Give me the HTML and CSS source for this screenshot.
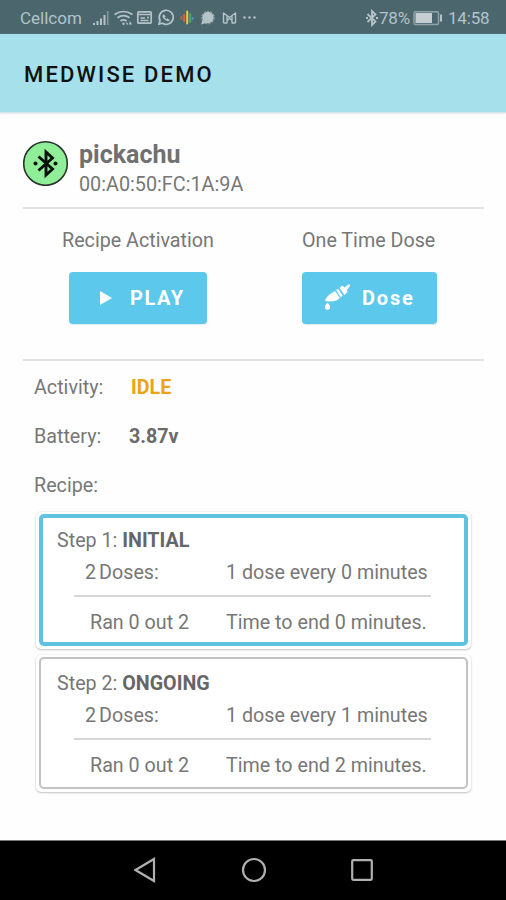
FILE: index.html
```html
<!DOCTYPE html>
<html lang="en">
<head>
<meta charset="utf-8">
<title>Medwise Demo</title>
<link rel="stylesheet" href="styles.css">
</head>
<body>
<div class="screen">
  <div class="status">
    <span class="carrier">Cellcom</span>
    <svg class="status-icons" width="170" height="24" viewBox="0 0 170 24" fill="#b4c3c8" stroke="none">
      <path d="M3 17h2v2H3zM6.500 15h2v4h-2zM10 12.500h2V19h-2zM13.500 9h2v10h-2z"/>
      <path d="M17 5h1.500v14H17z" opacity=".55"/>
      <g fill="none" stroke="#b4c3c8" stroke-width="1.700">
        <path d="M24.500 8.500q9-6 18 0M27.500 11.800q6-4.500 12 0M30.500 15q3-2.400 6 0"/>
        <rect x="47.800" y="5.800" width="13.400" height="11.400" rx="1"/>
        <path d="M48 8.500h13M50.500 12h4.500M57 11.500h2M50.500 14.500h8"/>
        <path d="M69 18l1-3.500A7 7 0 1 1 72.500 17.200Z"/>
        <path d="M73.500 8.500q-2 2 1 4.700t5 1.300l-1.800-1.900-1.300.9-2-2 1-1.300z" fill="#b4c3c8" stroke-width=".6"/>
      </g>
      <circle cx="33.500" cy="17.700" r="1.200"/><path d="M36.500 18.500v-3l2 3h-2zM40 15l2 3.500h-3z"/>
      <g stroke-width="2" stroke-linecap="round">
        <path d="M91.500 11v2" stroke="#d85749"/><path d="M94.200 9v6" stroke="#d9643f"/>
        <path d="M97.200 5.500v12" stroke="#e6ca49"/><path d="M100.200 8v8" stroke="#4ca86a"/><path d="M102.700 12v1" stroke="#568fc5"/>
      </g>
      <circle cx="118" cy="11.500" r="5.700"/><path d="M112.500 13.500l-1.300 5 5-1.500z"/>
      <circle cx="118" cy="11.500" r="6.300" fill="none" stroke="#b4c3c8" stroke-width=".8" stroke-dasharray="2 1.500"/>
      <path d="M133.500 17V7l6 4.500 6-4.500v10M133.500 17h3.500v-2.500l2.500-2 2.500 2v2.500h3.500M137 14.500V10M142 14.500V10" fill="none" stroke="#b4c3c8" stroke-width="1.400" stroke-linejoin="round"/>
      <circle cx="154.500" cy="11.500" r="1.200"/><circle cx="159.500" cy="11.500" r="1.200"/><circle cx="164.500" cy="11.500" r="1.200"/>
    </svg>
    <span class="spacer"></span>
    <svg class="bt" width="12" height="18" viewBox="0 0 12 18" fill="none" stroke="#b4c3c8" stroke-width="1.800"><path d="M1.500 5l8 7.500L6 16V2l3.500 3.500-8 7.500M0 9h2M10 9h2"/></svg>
    <span class="percent">78%</span>
    <svg class="battery" width="30" height="16" viewBox="0 0 30 16"><rect x="1" y="1.700" width="24.500" height="12.800" rx="1.500" fill="none" stroke="#91a2a8" stroke-width="1.500"/><path d="M2.500 3H19v10H2.500z" fill="#c4ced1"/><path d="M27 4.500h2v7h-2z" fill="#b4c3c8"/></svg>
    <span class="clock">14:58</span>
  </div>
  <header class="appbar"><h1>MEDWISE DEMO</h1></header>
  <main>
    <section class="device">
      <svg width="46" height="46" viewBox="0 0 46 46"><circle cx="22.500" cy="23.500" r="21.800" fill="#90ee98" stroke="#28352b" stroke-width="1.600"/><path d="M15.500 16.500l14 12.500-6.500 6V12l6.500 6-14 12.500" fill="none" stroke="#0b120c" stroke-width="2.900" stroke-linejoin="miter"/><circle cx="12.500" cy="23.500" r="2" fill="#0b120c"/><circle cx="32.500" cy="23.500" r="2" fill="#0b120c"/></svg>
      <div class="device-text">
        <div class="name">pickachu</div>
        <div class="mac">00:A0:50:FC:1A:9A</div>
      </div>
    </section>
    <section class="actions">
      <div class="action">
        <span class="action-label">Recipe Activation</span>
        <button class="btn play"><svg width="12" height="14" viewBox="0 0 12 14"><path d="M0 0l12 7-12 7z" fill="#fff"/></svg><span>PLAY</span></button>
      </div>
      <div class="action">
        <span class="action-label">One Time Dose</span>
        <button class="btn dose"><svg width="28" height="28" viewBox="0 0 28 28" fill="#fff"><path d="M1 17Q2.500 12 7 9.500l4-2.500 5 7-3.500 2.500Q7 18 1 17zM12 6l2-1.200 4.800 7-2 1.400zM15.500 4l3-2.500 1.800 2L24 .7q3-1 1.500 2L23 6l.5 2-3 3z"/><path d="M3.500 18.500q-3 3.200-2.700 4.500a2.700 2.700 0 0 0 5.400 0q.3-1.300-2.700-4.500z"/></svg><span>Dose</span></button>
      </div>
    </section>
    <section class="facts">
      <div class="fact"><span class="key">Activity:</span><b class="idle">IDLE</b></div>
      <div class="fact"><span class="key">Battery:</span><b class="volt">3.87v</b></div>
      <div class="fact"><span class="key">Recipe:</span></div>
    </section>
    <section class="steps">
      <article class="card active">
        <div class="inner">
          <div class="title">Step 1: <b>INITIAL</b></div>
          <div class="row doses"><span class="left">2<i></i>Doses:</span><span>1 dose every 0 minutes</span></div>
          <div class="row ran"><span class="left">Ran 0 out 2</span><span>Time to end 0 minutes.</span></div>
        </div>
      </article>
      <article class="card">
        <div class="inner">
          <div class="title">Step 2: <b>ONGOING</b></div>
          <div class="row doses"><span class="left">2<i></i>Doses:</span><span>1 dose every 1 minutes</span></div>
          <div class="row ran"><span class="left">Ran 0 out 2</span><span>Time to end 2 minutes.</span></div>
        </div>
      </article>
    </section>
  </main>
  <nav class="navbar">
    <svg width="22" height="26" viewBox="0 0 22 26"><path d="M1.500 13L20 2v22z"/></svg>
    <svg width="26" height="26" viewBox="0 0 26 26"><circle cx="13" cy="13" r="11"/></svg>
    <svg width="22" height="22" viewBox="0 0 22 22"><rect x="1.200" y="1.200" width="19.600" height="19.600" rx="1"/></svg>
  </nav>
</div>
</body>
</html>
```
FILE: styles.css
```css
* { box-sizing: border-box; }
body { margin: 0; font-family: Roboto, "Liberation Sans", sans-serif; font-size: 19.7px; color: #777; background: #fefefe; }
.screen { width: 506px; height: 900px; display: flex; flex-direction: column; overflow: hidden; }
.status { height: 34px; background: #4b666d; color: #b4c3c8; display: flex; align-items: center; padding: 2px 16px 0 20px; font-size: 17px; line-height: 32px; border-bottom: 1px solid #45616a; }
.carrier { width: 62px; letter-spacing: 0; }
.status-icons { margin-left: 8px; }
.spacer { flex: 1; }
.bt { margin-right: 1px; }
.percent { width: 34px; letter-spacing: -.2px; }
.battery { margin-right: 5px; }
.clock { width: 42px; letter-spacing: -.2px; }
.appbar { height: 79px; background: #a5e0eb; padding: 0 24px; border-bottom: 1px solid #d3e6ea; box-shadow: 0 1px 2px #e6e6e6; }
h1 { margin: 0; font-size: 22px; line-height: 82px; font-weight: 500; color: #111; letter-spacing: 2.15px; }
main { flex: 1; padding: 0 22px 0 23px; }
.device { height: 96px; padding-top: 27px; display: flex; gap: 10px; border-bottom: 2px solid #e2e2e2; }
.name { font-size: 25px; line-height: 29px; font-weight: 700; color: #707070; }
.mac { line-height: 31px; font-size: 19.8px; }
.actions { height: 152px; padding: 16px 0 0 39px; display: flex; border-bottom: 2px solid #e2e2e2; }
.action { width: 240px; flex-shrink: 0; display: flex; flex-direction: column; align-items: flex-start; }
.action:last-child { width: auto; }
.action-label { height: 47px; line-height: 31px; white-space: nowrap; }
.btn { height: 52px; border: 0; border-radius: 4px; background: #5bc8ec; color: #fff; font: 700 20px/52px Roboto, sans-serif; padding: 0; display: flex; align-items: center; box-shadow: 0 1px 1px #dcebf0; }
.play { width: 138px; margin-left: 7px; padding-left: 31px; gap: 18px; letter-spacing: 1.6px; }
.dose { width: 135px; padding-left: 22px; gap: 10px; letter-spacing: 1.8px; }
.facts { padding: 1px 0 0 11px; }
.fact { display: flex; height: 49px; line-height: 52px; }
.key { width: 97px; }
.idle { color: #eda316; }
.volt { color: #6a6a6a; margin-left: -2px; }
.steps { margin: 3px 13px 0; display: flex; flex-direction: column; gap: 6px; }
.card { height: 137px; padding: 2px 3px 3px; background: #fff; border-radius: 5px; box-shadow: 0 1px 2px #c4c4c4, 0 0 2px #e4e4e4; }
.inner { height: 132px; border: 2px solid #c2c2c2; border-radius: 5px; padding: 8px 35px 0 16px; }
.active .inner { border: 4px solid #60c2e0; padding: 6px 33px 0 14px; }
.title { height: 32px; line-height: 34px; }
.title b { color: #666; }
.row { display: flex; margin-left: 17px; white-space: nowrap; }
.row i { display: inline-block; width: 3px; }
.doses { height: 41px; line-height: 34px; border-bottom: 2px solid #d6d6d6; padding-left: 11px; }
.doses .left { width: 141px; }
.ran { padding-left: 16px; line-height: 52px; height: 46px; }
.ran .left { width: 136px; }
.navbar { height: 60px; background: #000; border-top: 1px solid #777; display: flex; align-items: center; padding: 0 0 1px 134px; fill: none; stroke: #b0b0b0; stroke-width: 2.2; }
.navbar svg:nth-child(2) { margin: 0 84px 0 85px; }
```
